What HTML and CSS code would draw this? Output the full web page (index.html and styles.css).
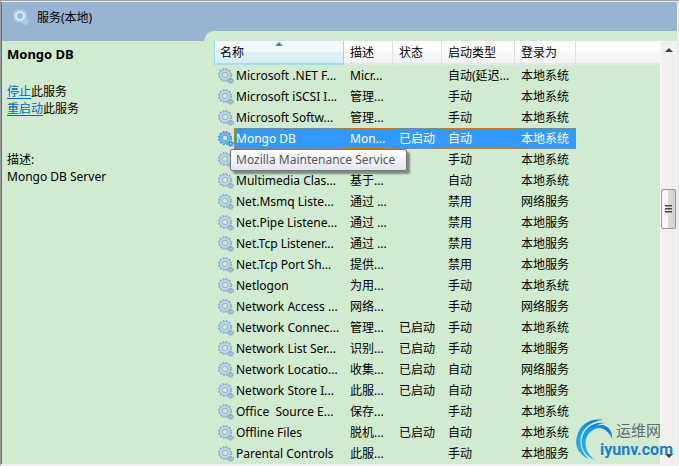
FILE: index.html
```html
<!DOCTYPE html>
<html lang="zh-CN">
<head>
    <meta charset="UTF-8">
    <meta name="viewport" content="width=device-width, initial-scale=1.0">
    <title>服务(本地)</title>
    <link rel="stylesheet" href="styles.css">
</head>
<body>

    <!-- Shared icons -->
    <svg class="defs" aria-hidden="true">
        <symbol id="gear" viewBox="0 0 16 16">
            <circle class="teeth" cx="7" cy="7" r="6.2" fill="none" stroke-width="1.8" stroke-dasharray="1.8 1.446"/>
            <circle class="ring" cx="7" cy="7" r="4.2" fill="none" stroke-width="2.6"/>
            <circle class="edge" cx="7" cy="7" r="5.4" fill="none" stroke-width="0.7"/>
            <circle class="edge" cx="7" cy="7" r="2.8" fill="none" stroke-width="0.9"/>
            <circle class="teeth" cx="12.8" cy="12.8" r="2.6" fill="none" stroke-width="1.2" stroke-dasharray="1.1 0.94"/>
            <circle class="small" cx="12.8" cy="12.8" r="1.5" fill="none" stroke-width="1.4"/>
        </symbol>
    </svg>

    <div class="window">
        <header class="title-bar">
            <svg class="gear"><use href="#gear"/></svg>
            <span>服务(本地)</span>
        </header>

        <div class="content">
            <aside class="details">
                <h1>Mongo DB</h1>
                <p class="actions">
                    <a href="#">停止</a>此服务<br>
                    <a href="#">重启动</a>此服务
                </p>
                <p>描述:<br>Mongo DB Server</p>
            </aside>

            <main class="list">
                <table>
                    <colgroup>
                        <col class="col-icon">
                        <col class="col-name">
                        <col class="col-desc">
                        <col class="col-state">
                        <col class="col-type">
                        <col class="col-login">
                        <col>
                    </colgroup>
                    <thead>
                        <tr>
                            <th colspan="2" class="sorted">名称</th>
                            <th>描述</th>
                            <th>状态</th>
                            <th>启动类型</th>
                            <th>登录为</th>
                            <th></th>
                        </tr>
                    </thead>
                    <tbody id="services"></tbody>
                </table>

                <div class="scrollbar">
                    <button class="arrow up" aria-label="Scroll up"></button>
                    <div class="before"></div>
                    <button class="thumb" aria-label="Scroll"><i></i><i></i><i></i></button>
                    <div class="after"></div>
                    <button class="arrow down" aria-label="Scroll down"></button>
                </div>
            </main>
        </div>

        <div class="watermark">
            <svg viewBox="0 0 38 42">
                <defs>
                    <linearGradient id="swirl" x1="0" y1="1" x2="1" y2="0">
                        <stop offset="0" stop-color="#2ab4f0"/>
                        <stop offset="0.6" stop-color="#1795e4"/>
                        <stop offset="1" stop-color="#1668b4"/>
                    </linearGradient>
                </defs>
                <path fill="url(#swirl)" d="M13 40C3 36 -2 27 1 17C4 5 15 -1 27 1C16 2 8 8 5 17C3 26 6 34 13 40Z"/>
                <path fill="url(#swirl)" d="M19 41C9 37 4 29 6 19C8 9 18 2 29 4C19 5 12 11 10 20C8 28 12 36 19 41Z"/>
                <path fill="url(#swirl)" d="M9 22C11 11 18 5 26 6C33 7 37 13 36 20C33 13 29 10 24 9C17 9 12 14 9 22Z"/>
            </svg>
            <div class="watermark-text">
                <span class="site-name">运维网</span>
                <span class="site-url">iyunv.com</span>
            </div>
        </div>
    </div>

    <script src="script.js"></script>
</body>
</html>
```
FILE: styles.css
```css
* {
    box-sizing: border-box;
}
body {
    margin: 0;
    background-color: #ececec;
    font-family: "Noto Sans", "Noto Sans CJK SC", sans-serif;
    font-size: 12px;
    color: #000;
}
.defs {
    position: absolute;
    width: 0;
    height: 0;
}
.window {
    position: relative;
    display: flex;
    flex-direction: column;
    min-height: 100vh;
    padding: 1px 2px 1px 0;
    border-left: 1px solid #a0a0a0;
    border-top: 1px solid #a0a0a0;
    border-bottom: 1px solid #f4f4f4;
}

/* Title */
.title-bar {
    display: flex;
    align-items: center;
    gap: 8px;
    height: 29px;
    padding: 0 11px;
    border-left: 1px solid #696969;
    background-color: #99b4d1;
}

/* Gears */
.gear {
    --teeth: #8fb0cb;
    --ring: #c0def3;
    --edge: #86a6c4;
    display: block;
    width: 16px;
    height: 16px;
}
.title-bar .gear {
    --teeth: #b4d0e6;
    --ring: #d5ecf8;
    --edge: #a9cbe4;
}
.teeth,
.small {
    stroke: var(--teeth);
}
.ring {
    stroke: var(--ring);
}
.edge {
    stroke: var(--edge);
}

/* Content */
.content {
    flex: 1;
    display: flex;
    border-left: 1px solid #696969;
    background-color: #99b4d1;
}
.details {
    flex: none;
    width: 202px;
    margin-top: 10px;
    padding: 5px;
    background-color: #d0ebd0;
    line-height: 17px;
}
.details h1 {
    margin: 0 0 20px;
    font-size: 13px;
    line-height: 17px;
}
.details p {
    margin: 0 0 34px;
}
.details a {
    color: #0066cc;
    text-underline-offset: 2px;
}
.list {
    flex: 1;
    display: flex;
    align-items: flex-start;
    min-width: 0;
    padding: 10px 0 0 10px;
    border-top-left-radius: 10px;
    background-color: #d0ebd0;
}
table {
    flex: 1;
    width: 100%;
    min-width: 0;
    table-layout: fixed;
    border-spacing: 0;
}
.col-icon {
    width: 20px;
}
.col-name {
    width: 110px;
}
.col-desc,
.col-state {
    width: 49px;
}
.col-type {
    width: 73px;
}
.col-login {
    width: 61px;
}
th {
    height: 24px;
    padding: 0 6px;
    border-right: 1px solid #dfe0e2;
    border-bottom: 2px solid #e4e6e8;
    background: linear-gradient(#fff 45%, #f7f8fa 50%, #f1f2f4);
    font-weight: normal;
    text-align: left;
    white-space: nowrap;
}
th:last-child {
    border-right: 0;
}
th.sorted {
    position: relative;
    padding-left: 5px;
    border-left: 1px solid #96d9f9;
    border-right-color: #96d9f9;
    border-bottom-color: #a8dcf2;
    background: linear-gradient(#f2f9fc 45%, #e1f1f9 50%, #d8ecf6);
}
th.sorted::before {
    content: "";
    position: absolute;
    top: 1px;
    left: 60px;
    border: 4px solid transparent;
    border-top: 0;
    border-bottom-color: #4d8ba8;
}
td {
    height: 21px;
    padding: 0 0 0 6px;
    line-height: 17px;
    white-space: pre;
}
td.icon {
    padding: 0 0 0 4px;
}
td.name {
    padding-left: 2px;
}
.selected td:not(.icon, .rest) {
    --dots: repeating-linear-gradient(to right, #e06c00 0 1px, #7d8c9c 1px 2px);
    background: var(--dots) top / 100% 1px no-repeat,
                var(--dots) bottom / 100% 1px no-repeat,
                #3399ff;
    color: #fff;
}
.selected .name {
    border-left: 1px dotted #d07820;
    padding-left: 1px;
}
.selected .login {
    border-right: 1px dotted #d07820;
}
.selected .gear {
    --teeth: #3a94e0;
    --ring: #78bbf2;
    --edge: #3d97e4;
}
.hovered .name {
    position: relative;
}
.tooltip {
    position: absolute;
    top: 0;
    left: -4px;
    height: 22px;
    padding: 0 11px 0 5px;
    border: 1px solid #767676;
    border-radius: 2px;
    background: linear-gradient(#fff, #e4e5f0);
    box-shadow: 3px 3px 2px rgba(0, 0, 0, 0.4);
    color: #575757;
    line-height: 20px;
}

/* Scrollbar */
.scrollbar {
    flex: none;
    align-self: stretch;
    display: flex;
    flex-direction: column;
    width: 17px;
    border-left: 1px solid #fafafa;
    background-color: #f0f0f0;
}
.arrow {
    height: 17px;
    padding: 0;
    border: 0;
    background: none;
}
.arrow::before {
    content: "";
    display: block;
    width: 0;
    margin: auto;
    border: 4px solid transparent;
}
.up::before {
    border-top: 0;
    border-bottom-color: #404040;
}
.down::before {
    border-bottom: 0;
    border-top-color: #404040;
}
.before {
    flex: 131;
}
.after {
    flex: 218;
}
.thumb {
    display: flex;
    flex-direction: column;
    align-items: center;
    justify-content: center;
    gap: 1px;
    height: 40px;
    width: 15px;
    padding: 0;
    border: 1px solid #979797;
    border-radius: 2px;
    background: linear-gradient(to right, #f6f6f6 45%, #dcdce0 50%, #cfcfd4);
}
.thumb i {
    width: 7px;
    height: 2px;
    border-top: 1px solid #444;
    background-color: #999;
}

/* Watermark */
.watermark {
    position: absolute;
    right: 6px;
    bottom: 4px;
    display: flex;
}
.watermark svg {
    width: 38px;
    height: 42px;
    margin-right: -14px;
}
.watermark-text {
    display: flex;
    flex-direction: column;
}
.site-name {
    padding-left: 16px;
    color: #626a72;
    font-size: 15px;
    line-height: 22px;
}
.site-url {
    color: #1a7fd2;
    font-family: Roboto, sans-serif;
    font-size: 16px;
    font-weight: bold;
    line-height: 18px;
}
```
FILE: script.js
```js
// name, description, state, startup type, log on as
const services = [
    ['Microsoft .NET F...', 'Micr...', '', '自动(延迟...', '本地系统'],
    ['Microsoft iSCSI I...', '管理...', '', '手动', '本地系统'],
    ['Microsoft Softw...', '管理...', '', '手动', '本地系统'],
    ['Mongo DB', 'Mon...', '已启动', '自动', '本地系统'],
    ['Mozilla Maintenance Service', '', '', '手动', '本地系统'],
    ['Multimedia Clas...', '基于...', '', '自动', '本地系统'],
    ['Net.Msmq Liste...', '通过 ...', '', '禁用', '网络服务'],
    ['Net.Pipe Listene...', '通过 ...', '', '禁用', '本地服务'],
    ['Net.Tcp Listener...', '通过 ...', '', '禁用', '本地服务'],
    ['Net.Tcp Port Sh...', '提供...', '', '禁用', '本地服务'],
    ['Netlogon', '为用...', '', '手动', '本地系统'],
    ['Network Access ...', '网络...', '', '手动', '网络服务'],
    ['Network Connec...', '管理...', '已启动', '手动', '本地系统'],
    ['Network List Ser...', '识别...', '已启动', '手动', '本地服务'],
    ['Network Locatio...', '收集...', '已启动', '自动', '网络服务'],
    ['Network Store I...', '此服...', '已启动', '自动', '本地服务'],
    ['Office  Source E...', '保存...', '', '手动', '本地系统'],
    ['Offline Files', '脱机...', '已启动', '自动', '本地系统'],
    ['Parental Controls', '此服...', '', '手动', '本地服务']
];
const selected = 3;
const hovered = 4;

document.getElementById('services').innerHTML = services.map(function(s, i) {
    const cls = i === selected ? 'selected' : i === hovered ? 'hovered' : '';
    const name = i === hovered ? `<span class="tooltip" role="tooltip">${s[0]}</span>` : s[0];
    return `<tr class="${cls}">
        <td class="icon"><svg class="gear"><use href="#gear"/></svg></td>
        <td class="name">${name}</td>
        <td>${s[1]}</td>
        <td>${s[2]}</td>
        <td>${s[3]}</td>
        <td class="login">${s[4]}</td>
        <td class="rest"></td>
    </tr>`;
}).join('');
```
